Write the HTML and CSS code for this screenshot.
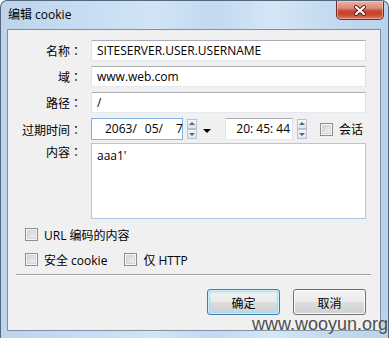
FILE: index.html
```html
<!DOCTYPE html>
<html>
<head>
<meta charset="utf-8">
<link rel="stylesheet" href="styles.css">
</head>
<body>
<div class="window">
  <div class="titlebar">
    <span class="title">编辑 cookie</span>
    <div class="close">
      <svg width="14" height="11" viewBox="0 0 14 11">
        <path d="M3 2 L11 9 M11 2 L3 9" stroke="#5a2118" stroke-width="4" stroke-linecap="round"/>
        <path d="M3 2 L11 9 M11 2 L3 9" stroke="#ffffff" stroke-width="2.2" stroke-linecap="round"/>
      </svg>
    </div>
  </div>
  <div class="client">
    <div class="row">
      <span class="lbl">名称<span class="colon">：</span></span>
      <div class="textbox wide">SITESERVER.USER.USERNAME</div>
    </div>
    <div class="row">
      <span class="lbl">域<span class="colon">：</span></span>
      <div class="textbox wide">www.web.com</div>
    </div>
    <div class="row">
      <span class="lbl">路径<span class="colon">：</span></span>
      <div class="textbox wide">/</div>
    </div>
    <div class="row daterow">
      <span class="lbl">过期时间<span class="colon">：</span></span>
      <div class="textbox datebox"><span>2063/</span><span class="dpart">05/</span><span class="dday">7</span></div>
      <div class="spin"><span class="up"></span><span class="down"></span></div>
      <span class="drop"></span>
      <div class="textbox timebox">20: 45: 44</div>
      <div class="spin"><span class="up"></span><span class="down"></span></div>
      <span class="check session"></span>
      <span class="ctext">会话</span>
    </div>
    <div class="row contentrow">
      <span class="lbl">内容<span class="colon">：</span></span>
      <div class="textbox area">aaa1'</div>
    </div>
    <div class="checks">
      <div class="crow"><span class="check"></span><span class="ctext">URL 编码的内容</span></div>
      <div class="crow second"><span class="check"></span><span class="ctext">安全 cookie</span><span class="check gapcheck"></span><span class="ctext">仅 HTTP</span></div>
    </div>
    <div class="sep"></div>
    <div class="buttons">
      <div class="btn default">确定</div>
      <div class="btn">取消</div>
    </div>
  </div>
  <div class="watermark">www.wooyun.org</div>
</div>
</body>
</html>
```
FILE: styles.css
```css
html, body {
  margin: 0;
  padding: 0;
  background: #ffffff;
}
body {
  font-family: "Open Sans", "Noto Sans CJK SC", sans-serif;
  font-size: 12px;
  color: #000;
}
.window {
  position: relative;
  width: 389px;
  height: 338px;
  box-sizing: border-box;
  border: 1px solid #55677c;
  border-bottom: none;
  border-radius: 7px 7px 0 0;
  background: linear-gradient(90deg, #bcd4ec 0%, #c6dcf2 20%, #d2e4f6 40%, #c2d9f0 55%, #d6e6f6 70%, #c4daf0 85%, #b9d2eb 100%);
  display: flex;
  flex-direction: column;
  overflow: hidden;
}
.titlebar {
  height: 28px;
  display: flex;
  align-items: flex-start;
  justify-content: space-between;
}
.title {
  margin-left: 7px;
  margin-top: 6px;
  font-size: 12px;
  line-height: 16px;
  color: #000;
}
.close {
  width: 46px;
  height: 18px;
  margin-right: 4px;
  border: 1px solid #6a2f25;
  border-top: none;
  border-radius: 0 0 5px 5px;
  background: linear-gradient(180deg, #eab1a4 0%, #dc8a78 40%, #c8462e 55%, #c9452d 75%, #dd7a5f 100%);
  box-shadow: inset 0 0 0 1px rgba(255, 230, 220, 0.45);
  display: flex;
  align-items: center;
  justify-content: center;
}
.client {
  flex: 1;
  margin: 0 7px 7px 6px;
  border: 1px solid #7f90a6;
  background: #f0f0f0;
  padding-top: 10px;
  display: flex;
  flex-direction: column;
}
.row {
  display: flex;
  align-items: center;
  height: 21px;
  margin-bottom: 5px;
}
.lbl {
  width: 74px;
  margin-right: 9px;
  text-align: right;
  flex: none;
  font-family: "Noto Sans CJK SC", sans-serif;
}
.colon {
  font-family: "Noto Sans CJK JP", sans-serif;
}
.textbox {
  box-sizing: border-box;
  height: 21px;
  background: #fff;
  border: 1px solid;
  border-color: #abadb3 #dbdfe6 #e3e9ef #e2e3ea;
  padding: 0 5px;
  line-height: 19px;
  white-space: nowrap;
}
.wide {
  width: 275px;
}
.daterow {
  height: 22px;
  margin-bottom: 3px;
}
.datebox {
  width: 92px;
  height: 22px;
  border-color: #7fb1e4;
  padding-left: 13px;
  line-height: 20px;
  display: flex;
}
.dpart {
  margin-left: 8px;
}
.dday {
  margin-left: 13px;
}
.timebox {
  margin-left: 14px;
  width: 68px;
  height: 22px;
  text-align: right;
  padding-right: 2px;
  line-height: 20px;
}
.spin {
  margin-left: 4px;
  width: 10px;
  height: 20px;
  display: flex;
  flex-direction: column;
}
.spin span {
  position: relative;
  box-sizing: border-box;
  flex: 1;
  border: 1px solid #b8c2ce;
  background: linear-gradient(180deg, #f7f8fa, #e1e4e8);
}
.spin .up::after,
.spin .down::after {
  content: "";
  position: absolute;
  left: 1px;
  width: 0;
  height: 0;
  border-left: 3px solid transparent;
  border-right: 3px solid transparent;
}
.spin .up::after {
  top: 2px;
  border-bottom: 3px solid #50617c;
}
.spin .down::after {
  top: 3px;
  border-top: 3px solid #50617c;
}
.drop {
  margin-left: 6px;
  margin-top: 3px;
  width: 0;
  height: 0;
  border-left: 4px solid transparent;
  border-right: 4px solid transparent;
  border-top: 4px solid #000;
}
.check {
  box-sizing: border-box;
  display: inline-block;
  width: 13px;
  height: 13px;
  border: 1px solid #8e8f8f;
  background: linear-gradient(135deg, #c9cdd2 0%, #e6e7e9 60%, #f4f4f4 100%);
  box-shadow: inset 0 0 0 1px #f6f6f6, inset 0 0 0 2px #d4d6d9;
  flex: none;
}
.session {
  margin-left: 13px;
}
.ctext {
  margin-left: 6px;
  font-family: "Open Sans", "Noto Sans CJK SC", sans-serif;
}
.contentrow {
  height: 76px;
  align-items: flex-start;
}
.contentrow .lbl {
  margin-top: 0;
}
.area {
  width: 275px;
  height: 76px;
  border: 1px solid #aec8e2;
  padding: 3px 5px;
  line-height: 17px;
}
.checks {
  padding-left: 17px;
  margin-top: 4px;
}
.crow {
  display: flex;
  align-items: center;
  height: 13px;
}
.crow.second {
  margin-top: 12px;
}
.gapcheck {
  margin-left: 17px;
}
.sep {
  margin: 8px 9px 0 8px;
  border-top: 1px solid #a0a0a0;
  border-bottom: 1px solid #ffffff;
}
.buttons {
  margin-top: 13px;
  display: flex;
  justify-content: flex-end;
  gap: 13px;
  padding-right: 14px;
}
.btn {
  box-sizing: border-box;
  width: 73px;
  height: 26px;
  border: 1px solid #707070;
  border-radius: 3px;
  background: linear-gradient(180deg, #f2f2f2 0%, #ebebeb 48%, #dddddd 52%, #cfcfcf 100%);
  box-shadow: inset 0 0 0 1px #fbfbfb;
  display: flex;
  align-items: center;
  justify-content: center;
  font-family: "Noto Sans CJK SC", sans-serif;
}
.btn.default {
  border-color: #3c7fb1;
  box-shadow: inset 0 0 0 1px #c9effc, inset 0 0 2px 2px #9fdcf5;
}
.watermark {
  position: absolute;
  left: 251px;
  top: 313px;
  font-family: "Liberation Sans", sans-serif;
  font-size: 18px;
  line-height: 21px;
  color: #4e4e4e;
  white-space: nowrap;
  text-shadow: 0 0 2px rgba(255, 255, 255, 0.6);
}
```
